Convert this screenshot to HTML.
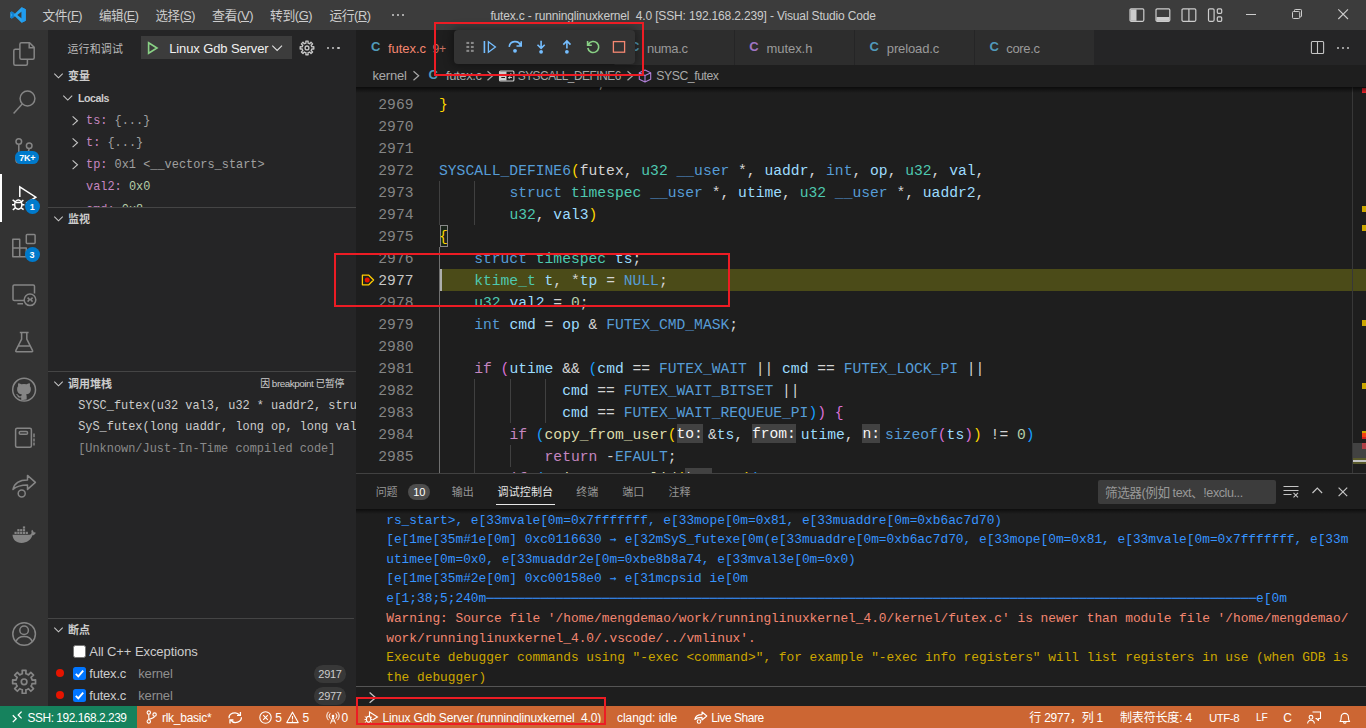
<!DOCTYPE html>
<html lang="zh-CN">
<head>
<meta charset="utf-8">
<title>futex.c - runninglinuxkernel_4.0 [SSH: 192.168.2.239] - Visual Studio Code</title>
<style>
*{box-sizing:border-box;margin:0;padding:0}
html,body{width:1366px;height:728px;overflow:hidden;background:#1e1e1e}
body{position:relative;font-family:"Liberation Sans","Noto Sans CJK SC",sans-serif;font-size:13px;color:#cccccc;line-height:1}
.abs{position:absolute}
.t{position:absolute;white-space:pre;line-height:20px;height:20px}
.mono{font-family:"Liberation Mono","Noto Sans CJK SC",monospace}
svg{position:absolute;overflow:visible}
/* title bar */
#titlebar{left:0;top:0;width:1366px;height:30px;background:#3c3c3c}
#titlebar .m{position:absolute;top:5px;height:20px;line-height:20px;font-size:13px;color:#cccccc;white-space:pre}
/* activity bar */
#activity{left:0;top:30px;width:48px;height:676px;background:#333333}
/* sidebar */
#sidebar{left:48px;top:30px;width:308px;height:676px;background:#252526}
/* editor */
#tabs{left:356px;top:30px;width:1010px;height:35px;background:#252526}
.tab{position:absolute;top:0;height:35px;background:#2d2d2d;color:#969696;font-size:13px}
#crumbs{left:356px;top:65px;width:1010px;height:22px;background:#1e1e1e}
#code{left:356px;top:87px;width:1010px;height:385px;background:#1e1e1e;overflow:hidden}
#panel{left:356px;top:472px;width:1010px;height:234px;background:#1e1e1e;border-top:1px solid #414141}
#status{left:0;top:706px;width:1366px;height:22px;background:#cc6633;color:#ffffff;font-size:12px}
.red{position:absolute;border:2px solid #e81123}
</style>
</head>
<body>
<div id="titlebar" class="abs">
<svg style="left:10px;top:7px;" width="16" height="16" viewBox="0 0 16 16"><path d="M11.6 0.3 L15.7 2.3 V13.7 L11.6 15.7 L4.9 9.2 L1.9 11.5 L0.3 10.7 V5.3 L1.9 4.5 L4.9 6.8 Z M11.7 4.6 L7.3 8 L11.7 11.4 Z" fill="#2aa5f0" fill-rule="evenodd"/><path d="M11.6 0.3 L15.7 2.3 V13.7 L11.6 15.7 Z" fill="#1f9cf0"/><path d="M0.3 5.3 L1.9 4.5 L4.9 6.8 L3.3 8 L4.9 9.2 L1.9 11.5 L0.3 10.7 L2.6 8 Z" fill="#0f7fd0"/></svg>
<span class="t" style="left:42.5px;top:5.6px;font-size:12.74px;line-height:20px;height:20px;letter-spacing:-0.450px;">文件(<u>F</u>)</span>
<span class="t" style="left:99px;top:5.6px;font-size:12.53px;line-height:20px;height:20px;letter-spacing:-0.450px;">编辑(<u>E</u>)</span>
<span class="t" style="left:155.5px;top:5.6px;font-size:12.53px;line-height:20px;height:20px;letter-spacing:-0.450px;">选择(<u>S</u>)</span>
<span class="t" style="left:212px;top:5.6px;font-size:12.98px;line-height:20px;height:20px;letter-spacing:-0.450px;">查看(<u>V</u>)</span>
<span class="t" style="left:270px;top:5.6px;font-size:12.85px;line-height:20px;height:20px;letter-spacing:-0.450px;">转到(<u>G</u>)</span>
<span class="t" style="left:329.4px;top:5.6px;font-size:12.8px;line-height:20px;height:20px;letter-spacing:-0.450px;">运行(<u>R</u>)</span>
<div class="abs" style="left:392px;top:14.2px;width:2px;height:2px;background:#cccccc;border-radius:1px;"></div>
<div class="abs" style="left:397.2px;top:14.2px;width:2px;height:2px;background:#cccccc;border-radius:1px;"></div>
<div class="abs" style="left:402.4px;top:14.2px;width:2px;height:2px;background:#cccccc;border-radius:1px;"></div>
<span class="t" style="left:490.4px;top:6px;font-size:12px;line-height:20px;height:20px;letter-spacing:-0.161px;">futex.c - runninglinuxkernel_4.0 [SSH: 192.168.2.239] - Visual Studio Code</span>
<svg style="left:1129px;top:8px;" width="16" height="16" viewBox="0 0 16 16"><rect x="1" y="0.9" width="13.8" height="12.4" rx="1.2" fill="none" stroke="#cccccc" stroke-width="1.2"/><rect x="1.5" y="1.4" width="6" height="11.4" fill="#cccccc"/></svg>
<svg style="left:1155px;top:8px;" width="16" height="16" viewBox="0 0 16 16"><rect x="1" y="0.9" width="13.8" height="12.4" rx="1.2" fill="none" stroke="#cccccc" stroke-width="1.2"/><rect x="1.5" y="9" width="12.8" height="3.9" fill="#cccccc"/></svg>
<svg style="left:1181px;top:8px;" width="16" height="16" viewBox="0 0 16 16"><rect x="1" y="0.9" width="13.8" height="12.4" rx="1.2" fill="none" stroke="#cccccc" stroke-width="1.2"/><path d="M7.9 1V13.2" stroke="#cccccc" stroke-width="1.2" fill="none"/></svg>
<svg style="left:1207px;top:8px;" width="16" height="16" viewBox="0 0 16 16"><rect x="1.500" y="0.900" width="5.600" height="12.400" rx="1.200" fill="none" stroke="#cccccc" stroke-width="1.2"/><rect x="10.300" y="0.900" width="4.400" height="4.400" rx="1" fill="none" stroke="#cccccc" stroke-width="1.2"/><rect x="10.300" y="8.900" width="4.400" height="4.400" rx="1" fill="none" stroke="#cccccc" stroke-width="1.2"/></svg>
<div class="abs" style="left:1245.7px;top:14px;width:10.3px;height:1px;background:#cccccc;"></div>
<svg style="left:1292px;top:9px;" width="11" height="10" viewBox="0 0 11 10"><rect x="0.500" y="2.500" width="7.200" height="7" rx="1" fill="none" stroke="#cccccc"/><path d="M2.500 2.500V1.300a.8.800 0 0 1 .8-.8H8.700a.8.800 0 0 1 .8.800V7a.8.800 0 0 1-.8.800H7.700" fill="none" stroke="#cccccc"/></svg>
<svg style="left:1338px;top:9px;" width="11" height="11" viewBox="0 0 11 11"><path d="M0.300 0.300L10 10M10 0.300L0.300 10" stroke="#cccccc" fill="none" stroke-width="1.100"/></svg>
</div>
<div id="activity" class="abs"></div>
<svg style="left:0;top:0" width="48" height="728" viewBox="0 0 48 728"><path d="M28.5 48.8V51.3H19.7V59.3M19.7 49.2H15.2a1.5 1.5 0 0 0-1.5 1.5V63.7a1.5 1.5 0 0 0 1.5 1.5H25.8a1.5 1.5 0 0 0 1.5-1.5V59.6" fill="none" stroke="#858585" stroke-width="0"/><path d="M19.9 49.3H15.3a1.5 1.5 0 0 0-1.5 1.5V63.8a1.5 1.5 0 0 0 1.5 1.5H25.9a1.5 1.5 0 0 0 1.5-1.5V59.5" fill="none" stroke="#858585" stroke-width="1.5"/><path d="M21.4 42.8H29.6L34.2 47.4V57.8a1.5 1.5 0 0 1-1.5 1.5H21.4a1.5 1.5 0 0 1-1.5-1.5V44.3a1.5 1.5 0 0 1 1.5-1.5Z" fill="none" stroke="#858585" stroke-width="1.5" stroke-linejoin="round"/><path d="M29.2 43V47.8H34" fill="none" stroke="#858585" stroke-width="1.5"/><circle cx="27.5" cy="98.5" r="7.4" fill="none" stroke="#858585" stroke-width="1.5"/><path d="M22.2 104 L13.6 113.6" fill="none" stroke="#858585" stroke-width="1.5"/><circle cx="18.8" cy="141.500" r="2.800" fill="none" stroke="#858585" stroke-width="1.5"/><circle cx="29.200" cy="145.800" r="2.800" fill="none" stroke="#858585" stroke-width="1.5"/><circle cx="18.800" cy="160" r="2.800" fill="none" stroke="#858585" stroke-width="1.5"/><path d="M18.8 144.2V157.3M29.2 148.5c0 4-4 5.5-10.4 6" fill="none" stroke="#858585" stroke-width="1.5"/><path d="M19.8 197V186.8L35.8 197.2L26 203.5" fill="none" stroke="#ffffff" stroke-width="1.5" stroke-linejoin="miter"/><ellipse cx="18.3" cy="204.6" rx="3.6" ry="4.6" fill="none" stroke="#ffffff" stroke-width="1.5"/><path d="M15.4 201.8 12.6 199.8M21.2 201.8 23.4 200.2M14.7 204.8H12M21.9 204.8H24.4M15.4 207.8 12.8 209.8M21.2 207.8 23.6 209.6M15.5 202.6H21.1" fill="none" stroke="#ffffff" stroke-width="1.5" stroke-width="1.2"/><path d="M12.8 239.300H19.700V248H26.300V256.800H12.800ZM12.800 248H19.700V256.800" fill="none" stroke="#858585" stroke-width="1.5" stroke-linejoin="round"/><rect x="26.3" y="234.6" width="8.8" height="8.8" rx="0.8" fill="none" stroke="#858585" stroke-width="1.5"/><path d="M24 300.6H14.3a1.3 1.3 0 0 1-1.3-1.3V286.3a1.3 1.3 0 0 1 1.3-1.3H33.2a1.3 1.3 0 0 1 1.3 1.3V293.5M17.4 303.7H23" fill="none" stroke="#858585" stroke-width="1.5"/><circle cx="30" cy="299.8" r="5.8" fill="none" stroke="#858585" stroke-width="1.5" stroke-width="1.3"/><path d="M27.6 297.6 29.6 299.6 27.6 301.6M32.6 297.6 30.6 299.6 32.6 301.6" fill="none" stroke="#858585" stroke-width="1.5" stroke-width="1"/><path d="M19.8 332.4H28.6M21.6 332.6V339.2L15.8 350.6a0.8 0.8 0 0 0 .7 1.2H31.9a0.8 0.8 0 0 0 .7-1.2L26.8 339.2V332.6M18.4 346H29.8" fill="none" stroke="#858585" stroke-width="1.5" stroke-linejoin="round"/><circle cx="24.1" cy="389.7" r="11.4" fill="none" stroke="#858585" stroke-width="1.5" stroke-width="1.6"/><path d="M21.2 400.2v-2.6c-3 .7-3.6-1.4-3.6-1.4-.5-1.2-1.2-1.6-1.2-1.6-1-.7.1-.7.1-.7 1.1.1 1.7 1.1 1.7 1.1 1 1.7 2.500 1.2 3.100.9.1-.7.4-1.200.7-1.500-2.400-.300-4.900-1.200-4.900-5.400 0-1.200.4-2.200 1.100-2.900-.1-.300-.5-1.400.1-2.900 0 0 .9-.3 3 1.100a10.300 10.300 0 0 1 5.400 0c2.100-1.400 3-1.100 3-1.100.6 1.500.2 2.600.1 2.900.7.700 1.100 1.700 1.100 2.900 0 4.200-2.500 5.100-4.900 5.400.4.300.700 1 .700 2v3.200Z" fill="#858585"/><rect x="15.6" y="428.2" width="15.8" height="19" rx="1.5" fill="none" stroke="#858585" stroke-width="1.5"/><rect x="19.2" y="431.6" width="8.4" height="2.600" rx="1.3" fill="none" stroke="#858585" stroke-width="1.5" stroke-width="1.1"/><path d="M34 433.6V437.2M34 438.400V441.4M34 442.400V445.600" fill="none" stroke="#858585" stroke-width="1.5"/><path d="M13 489.400C14.500 482.500 20 480 27.500 480V475.400L35.400 482.400L27.500 489.400V485C22 485 17.500 485.500 13 489.400Z" fill="none" stroke="#858585" stroke-width="1.5" stroke-linejoin="round"/><circle cx="21.700" cy="493.400" r="3.500" fill="none" stroke="#858585" stroke-width="1.5"/><path d="M12.500 534.800H29.500C30.600 534.800 31.400 534 31.600 532.600C31.200 531.800 31.300 530.700 32 529.800C33 530.500 33.500 531.400 33.600 532.300C34.500 532.100 35.300 532.300 35.800 532.700C35.300 534.300 34 535.200 32.400 535.300C30.800 540 27 542.900 21.600 542.900C16 542.900 12.800 539.700 12.500 534.800Z" fill="#858585"/><rect x="14.5" y="531.8" width="2.2" height="2.200" fill="#858585"/><rect x="17.3" y="531.8" width="2.2" height="2.200" fill="#858585"/><rect x="20.1" y="531.8" width="2.2" height="2.200" fill="#858585"/><rect x="22.9" y="531.8" width="2.2" height="2.200" fill="#858585"/><rect x="25.7" y="531.8" width="2.2" height="2.200" fill="#858585"/><rect x="17.3" y="529.1" width="2.2" height="2.200" fill="#858585"/><rect x="20.1" y="529.1" width="2.2" height="2.200" fill="#858585"/><rect x="22.9" y="529.1" width="2.2" height="2.200" fill="#858585"/><rect x="22.9" y="526.4" width="2.2" height="2.200" fill="#858585"/><circle cx="24.1" cy="634" r="11.3" fill="none" stroke="#858585" stroke-width="1.5"/><circle cx="24.100" cy="630.200" r="4.300" fill="none" stroke="#858585" stroke-width="1.5"/><path d="M16 641.800C17.200 637.500 20.500 636.400 24.100 636.400C27.700 636.400 31 637.500 32.200 641.800" fill="none" stroke="#858585" stroke-width="1.5"/><path d="M21.11 674.16 L22.34 673.79 L22.20 670.36 L26.00 670.36 L25.86 673.79 L27.39 674.29 L28.52 674.89 L30.84 672.36 L33.54 675.06 L31.01 677.38 L31.74 678.81 L32.11 680.04 L35.54 679.90 L35.54 683.70 L32.11 683.56 L31.61 685.09 L31.01 686.22 L33.54 688.54 L30.84 691.24 L28.52 688.71 L27.09 689.44 L25.86 689.81 L26.00 693.24 L22.20 693.24 L22.34 689.81 L20.81 689.31 L19.68 688.71 L17.36 691.24 L14.66 688.54 L17.19 686.22 L16.46 684.79 L16.09 683.56 L12.66 683.70 L12.66 679.90 L16.09 680.04 L16.59 678.51 L17.19 677.38 L14.66 675.06 L17.36 672.36 L19.68 674.89Z" fill="none" stroke="#858585" stroke-width="1.7" stroke-linejoin="round"/><circle cx="24.1" cy="681.8" r="2.8" fill="none" stroke="#858585" stroke-width="1.7"/></svg>
<div class="abs" style="left:0px;top:174px;width:2px;height:48px;background:#ffffff;"></div>
<div class="abs" style="left:14.8px;top:151.3px;width:24.7px;height:12.6px;background:#007acc;border-radius:6.3px;"></div>
<span class="t" style="left:19.2px;top:147.9px;font-size:9px;line-height:20px;height:20px;color:#ffffff;font-weight:bold;letter-spacing:-0.283px;">7K+</span>
<div class="abs" style="left:24.5px;top:198.5px;width:15px;height:15px;background:#007acc;border-radius:7.5px;"></div>
<span class="t" style="left:29.8px;top:196.6px;font-size:9px;line-height:20px;height:20px;color:#ffffff;font-weight:bold;">1</span>
<div class="abs" style="left:24.5px;top:247px;width:15px;height:15px;background:#007acc;border-radius:7.5px;"></div>
<span class="t" style="left:29.6px;top:245.1px;font-size:9px;line-height:20px;height:20px;color:#ffffff;font-weight:bold;">3</span>
<div id="sidebar" class="abs"></div>
<span class="t" style="left:67.5px;top:38.9px;font-size:11px;line-height:20px;height:20px;color:#bbbbbb;letter-spacing:0.125px;">运行和调试</span>
<div class="abs" style="left:141px;top:36px;width:151px;height:23px;background:#3c3c3c;"></div>
<svg style="left:147px;top:41px;" width="12" height="14" viewBox="0 0 12 14"><path d="M1.6 1.8V12.2L10 7Z" fill="none" stroke="#89d185" stroke-width="1.6" stroke-linejoin="miter"/></svg>
<span class="t" style="left:169.2px;top:38.9px;font-size:13px;line-height:20px;height:20px;color:#f0f0f0;letter-spacing:-0.118px;">Linux Gdb Server</span>
<svg style="left:272px;top:45.025px;" width="10.3" height="6.15" viewBox="0 0 10.3 6.15"><path d="M0.3 0.6L5.15 5.45L10 0.6" fill="none" stroke="#e0e0e0" stroke-width="1.1"/></svg>
<svg style="left:299px;top:40px;" width="16" height="16" viewBox="0 0 16 16"><path d="M6.21 3.34 L6.95 3.11 L6.87 1.09 L9.13 1.09 L9.05 3.11 L9.96 3.41 L10.64 3.77 L12.01 2.29 L13.61 3.89 L12.13 5.26 L12.56 6.11 L12.79 6.85 L14.81 6.77 L14.81 9.03 L12.79 8.95 L12.49 9.86 L12.13 10.54 L13.61 11.91 L12.01 13.51 L10.64 12.03 L9.79 12.46 L9.05 12.69 L9.13 14.71 L6.87 14.71 L6.95 12.69 L6.04 12.39 L5.36 12.03 L3.99 13.51 L2.39 11.91 L3.87 10.54 L3.44 9.69 L3.21 8.95 L1.19 9.03 L1.19 6.77 L3.21 6.85 L3.51 5.94 L3.87 5.26 L2.39 3.89 L3.99 2.29 L5.36 3.77Z" fill="none" stroke="#c5c5c5" stroke-width="1.35" stroke-linejoin="round"/><circle cx="8" cy="7.9" r="1.9" fill="none" stroke="#c5c5c5" stroke-width="1.35"/></svg>
<div class="abs" style="left:327px;top:46.8px;width:2.2px;height:2.2px;background:#c5c5c5;border-radius:1.1px;"></div>
<div class="abs" style="left:332.2px;top:46.8px;width:2.2px;height:2.2px;background:#c5c5c5;border-radius:1.1px;"></div>
<div class="abs" style="left:337.4px;top:46.8px;width:2.2px;height:2.2px;background:#c5c5c5;border-radius:1.1px;"></div>
<svg style="left:54px;top:73.25px;" width="9" height="5.5" viewBox="0 0 9 5.5"><path d="M0.3 0.6L4.5 4.8L8.7 0.6" fill="none" stroke="#c5c5c5" stroke-width="1.1"/></svg><span class="t" style="left:68px;top:66.1px;font-size:11px;line-height:20px;height:20px;color:#cccccc;font-weight:bold;">变量</span>
<svg style="left:63px;top:95.125px;" width="9.5" height="5.75" viewBox="0 0 9.5 5.75"><path d="M0.3 0.6L4.75 5.05L9.2 0.6" fill="none" stroke="#c5c5c5" stroke-width="1.1"/></svg>
<span class="t" style="left:78px;top:87.9px;font-size:10.65px;line-height:20px;height:20px;color:#cccccc;font-weight:bold;letter-spacing:-0.450px;">Locals</span>
<div class="abs" style="left:48px;top:109px;width:308px;height:98px;overflow:hidden">
<svg style="left:24.3px;top:6.65px;" width="6.225" height="9.5" viewBox="0 0 6.225 9.5"><path d="M0.6 0.3L5.525 4.75L0.6 9.2" fill="none" stroke="#c5c5c5" stroke-width="1.1"/></svg>
<span class="t" style="left:38px;top:2px;font-size:11.91px;line-height:20px;height:20px;font-family:'Liberation Mono','Noto Sans CJK SC',monospace;"><span style="color:#c586c0">ts:</span><span style="color:#a0a0a0"> {...}</span></span>
<svg style="left:24.3px;top:28.65px;" width="6.225" height="9.5" viewBox="0 0 6.225 9.5"><path d="M0.6 0.3L5.525 4.75L0.6 9.2" fill="none" stroke="#c5c5c5" stroke-width="1.1"/></svg>
<span class="t" style="left:38px;top:24px;font-size:11.91px;line-height:20px;height:20px;font-family:'Liberation Mono','Noto Sans CJK SC',monospace;"><span style="color:#c586c0">t:</span><span style="color:#a0a0a0"> {...}</span></span>
<svg style="left:24.3px;top:50.65px;" width="6.225" height="9.5" viewBox="0 0 6.225 9.5"><path d="M0.6 0.3L5.525 4.75L0.6 9.2" fill="none" stroke="#c5c5c5" stroke-width="1.1"/></svg>
<span class="t" style="left:38px;top:46px;font-size:11.91px;line-height:20px;height:20px;font-family:'Liberation Mono','Noto Sans CJK SC',monospace;"><span style="color:#c586c0">tp:</span><span style="color:#a0a0a0"> 0x1 &lt;__vectors_start&gt;</span></span>
<span class="t" style="left:38px;top:68px;font-size:11.91px;line-height:20px;height:20px;font-family:'Liberation Mono','Noto Sans CJK SC',monospace;"><span style="color:#c586c0">val2:</span><span style="color:#b5cea8"> 0x0</span></span>
<span class="t" style="left:38px;top:90.7px;font-size:11.91px;line-height:20px;height:20px;font-family:'Liberation Mono','Noto Sans CJK SC',monospace;"><span style="color:#c586c0">cmd:</span><span style="color:#b5cea8"> 0x8</span></span>
</div>
<div class="abs" style="left:48px;top:207px;width:308px;height:1px;background:#454545;"></div>
<svg style="left:54px;top:216.45px;" width="9" height="5.5" viewBox="0 0 9 5.5"><path d="M0.3 0.6L4.5 4.8L8.7 0.6" fill="none" stroke="#c5c5c5" stroke-width="1.1"/></svg><span class="t" style="left:68px;top:209.3px;font-size:11px;line-height:20px;height:20px;color:#cccccc;font-weight:bold;">监视</span>
<div class="abs" style="left:48px;top:371px;width:308px;height:1px;background:#454545;"></div>
<svg style="left:54px;top:380.65px;" width="9" height="5.5" viewBox="0 0 9 5.5"><path d="M0.3 0.6L4.5 4.8L8.7 0.6" fill="none" stroke="#c5c5c5" stroke-width="1.1"/></svg><span class="t" style="left:68px;top:373.5px;font-size:11px;line-height:20px;height:20px;color:#cccccc;font-weight:bold;">调用堆栈</span>
<span class="t" style="left:260.2px;top:374.2px;font-size:9.86px;line-height:20px;height:20px;color:#cccccc;letter-spacing:-0.450px;">因 breakpoint 已暂停</span>
<div class="abs" style="left:48px;top:393px;width:308px;height:70px;overflow:hidden">
<span class="t" style="left:30.2px;top:2.5px;font-size:11.91px;line-height:20px;height:20px;color:#cccccc;font-family:'Liberation Mono','Noto Sans CJK SC',monospace;">SYSC_futex(u32 val3, u32 * uaddr2, struct timespec * utime</span>
<span class="t" style="left:30.2px;top:24.3px;font-size:11.91px;line-height:20px;height:20px;color:#cccccc;font-family:'Liberation Mono','Noto Sans CJK SC',monospace;">SyS_futex(long uaddr, long op, long val, long utime</span>
<span class="t" style="left:30.2px;top:46.3px;font-size:11.91px;line-height:20px;height:20px;color:#8b8b8b;font-family:'Liberation Mono','Noto Sans CJK SC',monospace;">[Unknown/Just-In-Time compiled code]</span>
</div>
<div class="abs" style="left:48px;top:618px;width:306px;height:1px;background:#454545;"></div>
<svg style="left:54px;top:627.45px;" width="9" height="5.5" viewBox="0 0 9 5.5"><path d="M0.3 0.6L4.5 4.8L8.7 0.6" fill="none" stroke="#c5c5c5" stroke-width="1.1"/></svg><span class="t" style="left:68px;top:620.3px;font-size:11px;line-height:20px;height:20px;color:#cccccc;font-weight:bold;">断点</span>
<div class="abs" style="left:73px;top:645.3px;width:13px;height:13px;background:#ffffff;border:1px solid #767676;border-radius:2.5px;"></div>
<span class="t" style="left:89.3px;top:642.4px;font-size:13px;line-height:20px;height:20px;color:#cccccc;letter-spacing:-0.079px;">All C++ Exceptions</span>
<div class="abs" style="left:55.7px;top:669.3px;width:8.2px;height:8.2px;background:#e51400;border-radius:50%;"></div>
<div class="abs" style="left:73px;top:667px;width:13px;height:13px;background:#0075ff;border-radius:2.5px;"></div>
<svg style="left:73px;top:667px;" width="13" height="13" viewBox="0 0 13 13"><path d="M2.8 6.8L5.3 9.3L10.2 3.6" fill="none" stroke="#ffffff" stroke-width="1.9"/></svg>
<span class="t" style="left:89.3px;top:664.2px;font-size:13px;line-height:20px;height:20px;color:#cccccc;letter-spacing:-0.216px;">futex.c</span>
<span class="t" style="left:138.3px;top:664.2px;font-size:13px;line-height:20px;height:20px;color:#8f8f8f;letter-spacing:-0.184px;">kernel</span>
<div class="abs" style="left:314px;top:665.1px;width:32px;height:17.6px;background:#383838;border-radius:8.8px;"></div>
<span class="t" style="left:318.3px;top:664.4px;font-size:11px;line-height:20px;height:20px;color:#cccccc;letter-spacing:-0.261px;">2917</span>
<div class="abs" style="left:55.7px;top:691.3px;width:8.2px;height:8.2px;background:#e51400;border-radius:50%;"></div>
<div class="abs" style="left:73px;top:689px;width:13px;height:13px;background:#0075ff;border-radius:2.5px;"></div>
<svg style="left:73px;top:689px;" width="13" height="13" viewBox="0 0 13 13"><path d="M2.8 6.8L5.3 9.3L10.2 3.6" fill="none" stroke="#ffffff" stroke-width="1.9"/></svg>
<span class="t" style="left:89.3px;top:686.2px;font-size:13px;line-height:20px;height:20px;color:#cccccc;letter-spacing:-0.216px;">futex.c</span>
<span class="t" style="left:138.3px;top:686.2px;font-size:13px;line-height:20px;height:20px;color:#8f8f8f;letter-spacing:-0.184px;">kernel</span>
<div class="abs" style="left:314px;top:687.1px;width:32px;height:17.6px;background:#383838;border-radius:8.8px;"></div>
<span class="t" style="left:318.3px;top:686.4px;font-size:11px;line-height:20px;height:20px;color:#cccccc;letter-spacing:-0.261px;">2977</span>
<div id="tabs" class="abs"></div>
<div class="abs" style="left:356px;top:30px;width:258px;height:35px;background:#1e1e1e;"></div>
<span class="t" style="left:371px;top:37.1px;font-size:13px;line-height:20px;height:20px;color:#519aba;font-weight:bold;">C</span>
<span class="t" style="left:388px;top:38.8px;font-size:13px;line-height:20px;height:20px;color:#f48771;letter-spacing:-0.049px;">futex.c</span>
<span class="t" style="left:432.6px;top:38.8px;font-size:12.15px;line-height:20px;height:20px;color:#c87060;letter-spacing:-0.450px;">9+</span>
<div class="abs" style="left:615px;top:30px;width:119px;height:35px;background:#2d2d2d;"></div>
<span class="t" style="left:629.9px;top:37.1px;font-size:13px;line-height:20px;height:20px;color:#519aba;font-weight:bold;">C</span>
<span class="t" style="left:647px;top:38.8px;font-size:13px;line-height:20px;height:20px;color:#9a9a9a;letter-spacing:-0.328px;">numa.c</span>
<div class="abs" style="left:735px;top:30px;width:119px;height:35px;background:#2d2d2d;"></div>
<span class="t" style="left:749.2px;top:37.1px;font-size:13px;line-height:20px;height:20px;color:#a074c4;font-weight:bold;">C</span>
<span class="t" style="left:766.6px;top:38.8px;font-size:13px;line-height:20px;height:20px;color:#9a9a9a;letter-spacing:-0.075px;">mutex.h</span>
<div class="abs" style="left:855px;top:30px;width:119px;height:35px;background:#2d2d2d;"></div>
<span class="t" style="left:869.4px;top:37.1px;font-size:13px;line-height:20px;height:20px;color:#519aba;font-weight:bold;">C</span>
<span class="t" style="left:886.8px;top:38.8px;font-size:13px;line-height:20px;height:20px;color:#9a9a9a;letter-spacing:-0.123px;">preload.c</span>
<div class="abs" style="left:975px;top:30px;width:119px;height:35px;background:#2d2d2d;"></div>
<span class="t" style="left:989.4px;top:37.1px;font-size:13px;line-height:20px;height:20px;color:#519aba;font-weight:bold;">C</span>
<span class="t" style="left:1006.3px;top:38.8px;font-size:13px;line-height:20px;height:20px;color:#9a9a9a;letter-spacing:-0.341px;">core.c</span>
<svg style="left:1310px;top:40px;" width="16" height="16" viewBox="0 0 16 16"><rect x="1.400" y="1.500" width="12.200" height="12" rx="1" fill="none" stroke="#c5c5c5" stroke-width="1.100"/><path d="M7.500 1.500V13.500" stroke="#c5c5c5" stroke-width="1.1"/></svg>
<div class="abs" style="left:1336.7px;top:46.6px;width:2.2px;height:2.2px;background:#c5c5c5;border-radius:1.1px;"></div>
<div class="abs" style="left:1341.8px;top:46.6px;width:2.2px;height:2.2px;background:#c5c5c5;border-radius:1.1px;"></div>
<div class="abs" style="left:1346.9px;top:46.6px;width:2.2px;height:2.2px;background:#c5c5c5;border-radius:1.1px;"></div>
<div id="crumbs" class="abs"></div>
<span class="t" style="left:372.4px;top:66.4px;font-size:13px;line-height:20px;height:20px;color:#a9a9a9;letter-spacing:-0.164px;">kernel</span>
<svg style="left:412.5px;top:71.3px;" width="6.376" height="9.6" viewBox="0 0 6.376 9.6"><path d="M0.5 0.3L5.676 4.8L0.5 9.3" fill="none" stroke="#a9a9a9" stroke-width="1.2"/></svg>
<span class="t" style="left:428.4px;top:64.9px;font-size:13px;line-height:20px;height:20px;color:#519aba;font-weight:bold;">C</span>
<span class="t" style="left:446px;top:66.4px;font-size:13px;line-height:20px;height:20px;color:#a9a9a9;letter-spacing:-0.383px;">futex.c</span>
<svg style="left:487px;top:71.3px;" width="6.376" height="9.6" viewBox="0 0 6.376 9.6"><path d="M0.5 0.3L5.676 4.8L0.5 9.3" fill="none" stroke="#a9a9a9" stroke-width="1.2"/></svg>
<svg style="left:499px;top:69.5px;" width="15" height="12" viewBox="0 0 15 12"><rect x="0.5" y="1" width="14.4" height="10" rx="1" fill="none" stroke="#d0d0d0" stroke-width="1.1"/><rect x="1" y="1.500" width="6.500" height="9" fill="#d0d0d0"/><path d="M2.300 7.500H6M2.300 5H6" stroke="#1e1e1e" stroke-width="1"/><path d="M9 4.500H13M9 7.500H13M12 3 10 9" stroke="#d0d0d0" stroke-width="0.9" fill="none"/></svg>
<span class="t" style="left:517.7px;top:66.4px;font-size:11.85px;line-height:20px;height:20px;color:#a9a9a9;letter-spacing:-0.450px;">SYSCALL_DEFINE6</span>
<svg style="left:627px;top:71.3px;" width="6.376" height="9.6" viewBox="0 0 6.376 9.6"><path d="M0.5 0.3L5.676 4.8L0.5 9.3" fill="none" stroke="#a9a9a9" stroke-width="1.2"/></svg>
<svg style="left:638px;top:69px;" width="14" height="14" viewBox="0 0 14 14"><path d="M7 1L12.700 3.800V10.200L7 13L1.300 10.200V3.800ZM1.500 3.900L7 6.600L12.500 3.900M7 6.600V12.800" fill="none" stroke="#b180d7" stroke-width="1.100" stroke-linejoin="round"/></svg>
<span class="t" style="left:656.3px;top:66.4px;font-size:12.25px;line-height:20px;height:20px;color:#a9a9a9;letter-spacing:-0.450px;">SYSC_futex</span>
<div class="abs" style="left:356px;top:87px;width:1010px;height:6px;background:linear-gradient(#000000a0,#00000000);z-index:3;"></div>
<div class="abs" style="left:454px;top:30px;width:181px;height:34px;background:#333333;border-radius:4px;box-shadow:0 0 8px 2px rgba(0,0,0,.36);z-index:5;"></div>
<svg style="left:0;top:0;z-index:6" width="700" height="70" viewBox="0 0 700 70"><rect x="466.4" y="41.9" width="2.800" height="2.100" fill="#8a8a8a"/><rect x="466.4" y="45.9" width="2.800" height="2.100" fill="#8a8a8a"/><rect x="466.4" y="49.8" width="2.800" height="2.100" fill="#8a8a8a"/><rect x="470.9" y="41.9" width="2.800" height="2.100" fill="#8a8a8a"/><rect x="470.9" y="45.9" width="2.800" height="2.100" fill="#8a8a8a"/><rect x="470.9" y="49.8" width="2.800" height="2.100" fill="#8a8a8a"/><path d="M484.400 41V53" stroke="#75beff" stroke-width="1.600" fill="none"/><path d="M488.400 41.800V52.200L495.400 47Z" stroke="#75beff" stroke-width="1.300" fill="none" stroke-linejoin="miter"/><path d="M509.200 46.800A5.900 5.900 0 0 1 520.600 45.500M521.200 41.200V46H516.500" stroke="#75beff" stroke-width="1.600" fill="none"/><circle cx="515" cy="50.800" r="1.900" fill="#75beff"/><path d="M541.100 40.800V48.200M537.500 44.800L541.100 48.400L544.700 44.800" stroke="#75beff" stroke-width="1.600" fill="none"/><circle cx="541.100" cy="51.800" r="1.900" fill="#75beff"/><path d="M566.900 48.600V41.200M563.300 44.600L566.900 41L570.500 44.600" stroke="#75beff" stroke-width="1.600" fill="none"/><circle cx="566.900" cy="51.800" r="1.900" fill="#75beff"/><path d="M588.400 44.300A5.500 5.500 0 1 1 587.800 48M587.600 41V45.200H591.800" stroke="#89d185" stroke-width="1.600" fill="none"/><rect x="613.400" y="41.600" width="11.200" height="10.600" fill="none" stroke="#f48771" stroke-width="1.300"/></svg>
<div id="code" class="abs" style="height:386px">
<div class="abs" style="left:83.6px;top:182px;width:927px;height:22px;background:#4b4b18;"></div>
<div class="abs" style="left:83.3px;top:94px;width:1px;height:44px;background:#404040;"></div>
<div class="abs" style="left:118.488px;top:94px;width:1px;height:44px;background:#404040;"></div>
<div class="abs" style="left:83.3px;top:160px;width:1px;height:264px;background:#707070;"></div>
<div class="abs" style="left:118.488px;top:292px;width:1px;height:132px;background:#404040;"></div>
<div class="abs" style="left:153.676px;top:292px;width:1px;height:44px;background:#404040;"></div>
<div class="abs" style="left:188.864px;top:292px;width:1px;height:44px;background:#404040;"></div>
<div class="abs" style="left:153.676px;top:358px;width:1px;height:22px;background:#404040;"></div>
<div class="abs" style="left:83.6px;top:182px;width:2px;height:22px;background:#aeafad;"></div>
<div class="abs" style="left:83.6px;top:138px;width:8.6px;height:22px;background:rgba(0,100,0,.1);border:1px solid #888888;"></div>
<span class="t" style="left:22.3px;top:-15.5px;font-size:14.66px;line-height:22px;height:22px;color:#858585;font-family:'Liberation Mono','Noto Sans CJK SC',monospace;">2968</span>
<span class="t" style="left:83px;top:-15.5px;font-size:14.66px;line-height:22px;height:22px;font-family:'Liberation Mono','Noto Sans CJK SC',monospace;"><span style="color:#d4d4d4">    </span><span style="color:#c586c0">return</span><span style="color:#d4d4d4"> -</span><span style="color:#569cd6">ENOSYS</span><span style="color:#d4d4d4">;</span></span>
<span class="t" style="left:22.3px;top:6.5px;font-size:14.66px;line-height:22px;height:22px;color:#858585;font-family:'Liberation Mono','Noto Sans CJK SC',monospace;">2969</span>
<span class="t" style="left:83px;top:6.5px;font-size:14.66px;line-height:22px;height:22px;font-family:'Liberation Mono','Noto Sans CJK SC',monospace;"><span style="color:#ffd700">}</span></span>
<span class="t" style="left:22.3px;top:28.5px;font-size:14.66px;line-height:22px;height:22px;color:#858585;font-family:'Liberation Mono','Noto Sans CJK SC',monospace;">2970</span>
<span class="t" style="left:22.3px;top:50.5px;font-size:14.66px;line-height:22px;height:22px;color:#858585;font-family:'Liberation Mono','Noto Sans CJK SC',monospace;">2971</span>
<span class="t" style="left:22.3px;top:72.5px;font-size:14.66px;line-height:22px;height:22px;color:#858585;font-family:'Liberation Mono','Noto Sans CJK SC',monospace;">2972</span>
<span class="t" style="left:83px;top:72.5px;font-size:14.66px;line-height:22px;height:22px;font-family:'Liberation Mono','Noto Sans CJK SC',monospace;"><span style="color:#569cd6">SYSCALL_DEFINE6</span><span style="color:#ffd700">(</span><span style="color:#d4d4d4">futex, </span><span style="color:#4ec9b0">u32</span><span style="color:#d4d4d4"> </span><span style="color:#569cd6">__user</span><span style="color:#d4d4d4"> *, </span><span style="color:#9cdcfe">uaddr</span><span style="color:#d4d4d4">, </span><span style="color:#569cd6">int</span><span style="color:#d4d4d4">, </span><span style="color:#9cdcfe">op</span><span style="color:#d4d4d4">, </span><span style="color:#4ec9b0">u32</span><span style="color:#d4d4d4">, </span><span style="color:#9cdcfe">val</span><span style="color:#d4d4d4">,</span></span>
<span class="t" style="left:22.3px;top:94.5px;font-size:14.66px;line-height:22px;height:22px;color:#858585;font-family:'Liberation Mono','Noto Sans CJK SC',monospace;">2973</span>
<span class="t" style="left:83px;top:94.5px;font-size:14.66px;line-height:22px;height:22px;font-family:'Liberation Mono','Noto Sans CJK SC',monospace;"><span style="color:#d4d4d4">        </span><span style="color:#569cd6">struct</span><span style="color:#d4d4d4"> </span><span style="color:#4ec9b0">timespec</span><span style="color:#d4d4d4"> </span><span style="color:#569cd6">__user</span><span style="color:#d4d4d4"> *, </span><span style="color:#9cdcfe">utime</span><span style="color:#d4d4d4">, </span><span style="color:#4ec9b0">u32</span><span style="color:#d4d4d4"> </span><span style="color:#569cd6">__user</span><span style="color:#d4d4d4"> *, </span><span style="color:#9cdcfe">uaddr2</span><span style="color:#d4d4d4">,</span></span>
<span class="t" style="left:22.3px;top:116.5px;font-size:14.66px;line-height:22px;height:22px;color:#858585;font-family:'Liberation Mono','Noto Sans CJK SC',monospace;">2974</span>
<span class="t" style="left:83px;top:116.5px;font-size:14.66px;line-height:22px;height:22px;font-family:'Liberation Mono','Noto Sans CJK SC',monospace;"><span style="color:#d4d4d4">        </span><span style="color:#4ec9b0">u32</span><span style="color:#d4d4d4">, </span><span style="color:#9cdcfe">val3</span><span style="color:#ffd700">)</span></span>
<span class="t" style="left:22.3px;top:138.5px;font-size:14.66px;line-height:22px;height:22px;color:#858585;font-family:'Liberation Mono','Noto Sans CJK SC',monospace;">2975</span>
<span class="t" style="left:83px;top:138.5px;font-size:14.66px;line-height:22px;height:22px;font-family:'Liberation Mono','Noto Sans CJK SC',monospace;"><span style="color:#ffd700">{</span></span>
<span class="t" style="left:22.3px;top:160.5px;font-size:14.66px;line-height:22px;height:22px;color:#858585;font-family:'Liberation Mono','Noto Sans CJK SC',monospace;">2976</span>
<span class="t" style="left:83px;top:160.5px;font-size:14.66px;line-height:22px;height:22px;font-family:'Liberation Mono','Noto Sans CJK SC',monospace;"><span style="color:#d4d4d4">    </span><span style="color:#569cd6">struct</span><span style="color:#d4d4d4"> </span><span style="color:#4ec9b0">timespec</span><span style="color:#d4d4d4"> </span><span style="color:#9cdcfe">ts</span><span style="color:#d4d4d4">;</span></span>
<span class="t" style="left:22.3px;top:182.5px;font-size:14.66px;line-height:22px;height:22px;color:#c6c6c6;font-family:'Liberation Mono','Noto Sans CJK SC',monospace;">2977</span>
<span class="t" style="left:83px;top:182.5px;font-size:14.66px;line-height:22px;height:22px;font-family:'Liberation Mono','Noto Sans CJK SC',monospace;"><span style="color:#d4d4d4">    </span><span style="color:#4ec9b0">ktime_t</span><span style="color:#d4d4d4"> </span><span style="color:#9cdcfe">t</span><span style="color:#d4d4d4">, *</span><span style="color:#9cdcfe">tp</span><span style="color:#d4d4d4"> = </span><span style="color:#569cd6">NULL</span><span style="color:#d4d4d4">;</span></span>
<span class="t" style="left:22.3px;top:204.5px;font-size:14.66px;line-height:22px;height:22px;color:#858585;font-family:'Liberation Mono','Noto Sans CJK SC',monospace;">2978</span>
<span class="t" style="left:83px;top:204.5px;font-size:14.66px;line-height:22px;height:22px;font-family:'Liberation Mono','Noto Sans CJK SC',monospace;"><span style="color:#d4d4d4">    </span><span style="color:#4ec9b0">u32</span><span style="color:#d4d4d4"> </span><span style="color:#9cdcfe">val2</span><span style="color:#d4d4d4"> = </span><span style="color:#b5cea8">0</span><span style="color:#d4d4d4">;</span></span>
<span class="t" style="left:22.3px;top:226.5px;font-size:14.66px;line-height:22px;height:22px;color:#858585;font-family:'Liberation Mono','Noto Sans CJK SC',monospace;">2979</span>
<span class="t" style="left:83px;top:226.5px;font-size:14.66px;line-height:22px;height:22px;font-family:'Liberation Mono','Noto Sans CJK SC',monospace;"><span style="color:#d4d4d4">    </span><span style="color:#569cd6">int</span><span style="color:#d4d4d4"> </span><span style="color:#9cdcfe">cmd</span><span style="color:#d4d4d4"> = </span><span style="color:#9cdcfe">op</span><span style="color:#d4d4d4"> &amp; </span><span style="color:#569cd6">FUTEX_CMD_MASK</span><span style="color:#d4d4d4">;</span></span>
<span class="t" style="left:22.3px;top:248.5px;font-size:14.66px;line-height:22px;height:22px;color:#858585;font-family:'Liberation Mono','Noto Sans CJK SC',monospace;">2980</span>
<span class="t" style="left:22.3px;top:270.5px;font-size:14.66px;line-height:22px;height:22px;color:#858585;font-family:'Liberation Mono','Noto Sans CJK SC',monospace;">2981</span>
<span class="t" style="left:83px;top:270.5px;font-size:14.66px;line-height:22px;height:22px;font-family:'Liberation Mono','Noto Sans CJK SC',monospace;"><span style="color:#d4d4d4">    </span><span style="color:#c586c0">if</span><span style="color:#d4d4d4"> </span><span style="color:#da70d6">(</span><span style="color:#9cdcfe">utime</span><span style="color:#d4d4d4"> &amp;&amp; </span><span style="color:#179fff">(</span><span style="color:#9cdcfe">cmd</span><span style="color:#d4d4d4"> == </span><span style="color:#569cd6">FUTEX_WAIT</span><span style="color:#d4d4d4"> || </span><span style="color:#9cdcfe">cmd</span><span style="color:#d4d4d4"> == </span><span style="color:#569cd6">FUTEX_LOCK_PI</span><span style="color:#d4d4d4"> ||</span></span>
<span class="t" style="left:22.3px;top:292.5px;font-size:14.66px;line-height:22px;height:22px;color:#858585;font-family:'Liberation Mono','Noto Sans CJK SC',monospace;">2982</span>
<span class="t" style="left:83px;top:292.5px;font-size:14.66px;line-height:22px;height:22px;font-family:'Liberation Mono','Noto Sans CJK SC',monospace;"><span style="color:#d4d4d4">              </span><span style="color:#9cdcfe">cmd</span><span style="color:#d4d4d4"> == </span><span style="color:#569cd6">FUTEX_WAIT_BITSET</span><span style="color:#d4d4d4"> ||</span></span>
<span class="t" style="left:22.3px;top:314.5px;font-size:14.66px;line-height:22px;height:22px;color:#858585;font-family:'Liberation Mono','Noto Sans CJK SC',monospace;">2983</span>
<span class="t" style="left:83px;top:314.5px;font-size:14.66px;line-height:22px;height:22px;font-family:'Liberation Mono','Noto Sans CJK SC',monospace;"><span style="color:#d4d4d4">              </span><span style="color:#9cdcfe">cmd</span><span style="color:#d4d4d4"> == </span><span style="color:#569cd6">FUTEX_WAIT_REQUEUE_PI</span><span style="color:#179fff">)</span><span style="color:#da70d6">)</span><span style="color:#d4d4d4"> </span><span style="color:#da70d6">{</span></span>
<span class="t" style="left:22.3px;top:336.5px;font-size:14.66px;line-height:22px;height:22px;color:#858585;font-family:'Liberation Mono','Noto Sans CJK SC',monospace;">2984</span>
<span class="t" style="left:83px;top:336.5px;font-size:14.66px;line-height:22px;height:22px;font-family:'Liberation Mono','Noto Sans CJK SC',monospace;"><span style="color:#d4d4d4">        </span><span style="color:#c586c0">if</span><span style="color:#d4d4d4"> </span><span style="color:#179fff">(</span><span style="color:#dcdcaa">copy_from_user</span><span style="color:#ffd700">(</span><span style="background:#424242;color:#f6f6f6;display:inline-block;height:19px;line-height:20px;vertical-align:top;margin-top:0.5px">to:</span><span style="display:inline-block;width:5px"></span><span style="color:#d4d4d4">&amp;</span><span style="color:#9cdcfe">ts</span><span style="color:#d4d4d4">, </span><span style="background:#424242;color:#f6f6f6;display:inline-block;height:19px;line-height:20px;vertical-align:top;margin-top:0.5px">from:</span><span style="display:inline-block;width:5px"></span><span style="color:#9cdcfe">utime</span><span style="color:#d4d4d4">, </span><span style="background:#424242;color:#f6f6f6;display:inline-block;height:19px;line-height:20px;vertical-align:top;margin-top:0.5px">n:</span><span style="display:inline-block;width:5px"></span><span style="color:#569cd6">sizeof</span><span style="color:#da70d6">(</span><span style="color:#9cdcfe">ts</span><span style="color:#da70d6">)</span><span style="color:#ffd700">)</span><span style="color:#d4d4d4"> != </span><span style="color:#b5cea8">0</span><span style="color:#179fff">)</span></span>
<span class="t" style="left:22.3px;top:358.5px;font-size:14.66px;line-height:22px;height:22px;color:#858585;font-family:'Liberation Mono','Noto Sans CJK SC',monospace;">2985</span>
<span class="t" style="left:83px;top:358.5px;font-size:14.66px;line-height:22px;height:22px;font-family:'Liberation Mono','Noto Sans CJK SC',monospace;"><span style="color:#d4d4d4">            </span><span style="color:#c586c0">return</span><span style="color:#d4d4d4"> -</span><span style="color:#569cd6">EFAULT</span><span style="color:#d4d4d4">;</span></span>
<span class="t" style="left:22.3px;top:380.5px;font-size:14.66px;line-height:22px;height:22px;color:#858585;font-family:'Liberation Mono','Noto Sans CJK SC',monospace;">2986</span>
<span class="t" style="left:83px;top:380.5px;font-size:14.66px;line-height:22px;height:22px;font-family:'Liberation Mono','Noto Sans CJK SC',monospace;"><span style="color:#d4d4d4">        </span><span style="color:#c586c0">if</span><span style="color:#d4d4d4"> </span><span style="color:#179fff">(</span><span style="color:#d4d4d4">!</span><span style="color:#dcdcaa">timespec_valid</span><span style="color:#ffd700">(</span><span style="background:#424242;color:#f6f6f6;display:inline-block;height:19px;line-height:20px;vertical-align:top;margin-top:0.5px">ts:</span><span style="display:inline-block;width:5px"></span><span style="color:#d4d4d4">&amp;</span><span style="color:#9cdcfe">ts</span><span style="color:#ffd700">)</span><span style="color:#179fff">)</span></span>
<svg style="left:5px;top:186px;" width="14" height="14" viewBox="0 0 14 14"><path d="M1.4 2.200H7.800L12.600 7L7.800 11.800H1.400Z" fill="none" stroke="#ffcc00" stroke-width="1.300" stroke-linejoin="round"/><circle cx="6.200" cy="7" r="2.500" fill="#e51400"/></svg>
<div class="abs" style="left:996px;top:0px;width:1px;height:386px;background:#383838;"></div>
<div class="abs" style="left:1006px;top:1px;width:4px;height:5px;background:#e8232b;"></div>
<div class="abs" style="left:1006px;top:119px;width:4px;height:6px;background:#cca700;"></div>
<div class="abs" style="left:1006px;top:138px;width:4px;height:5.5px;background:#cca700;"></div>
<div class="abs" style="left:1006px;top:233px;width:4px;height:5.5px;background:#cca700;"></div>
<div class="abs" style="left:1006px;top:296px;width:4px;height:5.5px;background:#cca700;"></div>
<div class="abs" style="left:1006px;top:344px;width:4px;height:2px;background:#cca700;"></div>
<div class="abs" style="left:1006px;top:346px;width:4px;height:4.3px;background:#f04010;"></div>
<div class="abs" style="left:1006px;top:350.3px;width:4px;height:1.7px;background:#d02020;"></div>
<div class="abs" style="left:997px;top:356px;width:13px;height:21px;background:#424242;"></div>
<div class="abs" style="left:1006px;top:356px;width:4px;height:6px;background:#b04045;"></div>
<div class="abs" style="left:997px;top:371px;width:13px;height:6px;background:#5a5a2c;"></div>
<div class="abs" style="left:997px;top:373px;width:13px;height:2px;background:#c4c4c4;"></div>
</div>
<div id="panel" class="abs" style="top:473px;height:233px"></div>
<span class="t" style="left:375.8px;top:482.4px;font-size:11px;line-height:20px;height:20px;color:#969696;letter-spacing:-0.300px;">问题</span>
<div class="abs" style="left:408.2px;top:483.9px;width:21.6px;height:16.5px;background:#4d4d4d;border-radius:8.300px;"></div>
<span class="t" style="left:413.2px;top:481.5px;font-size:11px;line-height:20px;height:20px;color:#ffffff;letter-spacing:-0.050px;">10</span>
<span class="t" style="left:451.7px;top:482.4px;font-size:11px;line-height:20px;height:20px;color:#969696;">输出</span>
<span class="t" style="left:497.6px;top:482.4px;font-size:11px;line-height:20px;height:20px;color:#e7e7e7;letter-spacing:0.100px;">调试控制台</span>
<div class="abs" style="left:496px;top:504px;width:59px;height:1px;background:#e7e7e7;"></div>
<span class="t" style="left:576.3px;top:482.4px;font-size:11px;line-height:20px;height:20px;color:#969696;">终端</span>
<span class="t" style="left:622.2px;top:482.4px;font-size:11px;line-height:20px;height:20px;color:#969696;">端口</span>
<span class="t" style="left:668.5px;top:482.4px;font-size:11px;line-height:20px;height:20px;color:#969696;">注释</span>
<div class="abs" style="left:1098px;top:480px;width:177.6px;height:24px;background:#3c3c3c;border-radius:2px;"></div>
<span class="t" style="left:1105px;top:482.9px;font-size:12.62px;line-height:20px;height:20px;color:#989898;letter-spacing:-0.450px;">筛选器(例如 text、!exclu...</span>
<svg style="left:1283px;top:484px;" width="16" height="14" viewBox="0 0 16 14"><path d="M0.5 2.500H15.500M0.500 6.500H15.500M0.500 10.500H8.500M10.500 8.800L15 13.300M15 8.800L10.500 13.300" stroke="#c5c5c5" stroke-width="1.100" fill="none"/></svg>
<svg style="left:1311.5px;top:487px;" width="11" height="7" viewBox="0 0 11 7"><path d="M0.500 6L5.300 1.200L10.100 6" stroke="#c5c5c5" stroke-width="1.200" fill="none"/></svg>
<svg style="left:1338px;top:486.6px;" width="10" height="10" viewBox="0 0 10 10"><path d="M0.600 0.600L9.200 9.200M9.200 0.600L0.600 9.200" stroke="#c5c5c5" stroke-width="1.200" fill="none"/></svg>
<div class="abs" style="left:356px;top:509px;width:1010px;height:5px;background:linear-gradient(#00000090,#00000000);"></div>
<span class="t" style="left:386.2px;top:510.6px;font-size:12.83px;line-height:20px;height:20px;color:#3794ff;font-family:'Liberation Mono','Noto Sans CJK SC',monospace;">rs_start&gt;, e[33mvale[0m=0x7fffffff, e[33mope[0m=0x81, e[33muaddre[0m=0xb6ac7d70)</span>
<span class="t" style="left:386.2px;top:529.6px;font-size:12.83px;line-height:20px;height:20px;color:#3794ff;font-family:'Liberation Mono','Noto Sans CJK SC',monospace;">[e[1me[35m#1e[0m] 0xc0116630 <span style="display:inline-block;width:7.697px;text-align:center;font-family:'DejaVu Sans Mono',monospace;font-size:11px;vertical-align:top">→</span> e[32mSyS_futexe[0m(e[33muaddre[0m=0xb6ac7d70, e[33mope[0m=0x81, e[33mvale[0m=0x7fffffff, e[33m</span>
<span class="t" style="left:386.2px;top:549.6px;font-size:12.83px;line-height:20px;height:20px;color:#3794ff;font-family:'Liberation Mono','Noto Sans CJK SC',monospace;">utimee[0m=0x0, e[33muaddr2e[0m=0xbe8b8a74, e[33mval3e[0m=0x0)</span>
<span class="t" style="left:386.2px;top:568.6px;font-size:12.83px;line-height:20px;height:20px;color:#3794ff;font-family:'Liberation Mono','Noto Sans CJK SC',monospace;">[e[1me[35m#2e[0m] 0xc00158e0 <span style="display:inline-block;width:7.697px;text-align:center;font-family:'DejaVu Sans Mono',monospace;font-size:11px;vertical-align:top">→</span> e[31mcpsid ie[0m</span>
<span class="t" style="left:386.2px;top:588.6px;font-size:12.83px;line-height:20px;height:20px;color:#3794ff;font-family:'Liberation Mono','Noto Sans CJK SC',monospace;">e[1;38;5;240m────────────────────────────────────────────────────────────────────────────────────────────────────e[0m</span>
<span class="t" style="left:386.2px;top:608.6px;font-size:12.83px;line-height:20px;height:20px;color:#f48771;font-family:'Liberation Mono','Noto Sans CJK SC',monospace;">Warning: Source file '/home/mengdemao/work/runninglinuxkernel_4.0/kernel/futex.c' is newer than module file '/home/mengdemao/</span>
<span class="t" style="left:386.2px;top:628.6px;font-size:12.83px;line-height:20px;height:20px;color:#f48771;font-family:'Liberation Mono','Noto Sans CJK SC',monospace;">work/runninglinuxkernel_4.0/.vscode/../vmlinux'.</span>
<span class="t" style="left:386.2px;top:647.6px;font-size:12.83px;line-height:20px;height:20px;color:#cca700;font-family:'Liberation Mono','Noto Sans CJK SC',monospace;">Execute debugger commands using "-exec &lt;command&gt;", for example "-exec info registers" will list registers in use (when GDB is</span>
<span class="t" style="left:386.2px;top:667.6px;font-size:12.83px;line-height:20px;height:20px;color:#cca700;font-family:'Liberation Mono','Noto Sans CJK SC',monospace;">the debugger)</span>
<div class="abs" style="left:356px;top:686px;width:1010px;height:1px;background:#555555;"></div>
<svg style="left:369px;top:691.5px;" width="8" height="12" viewBox="0 0 8 12"><path d="M0.600 0.600L6.600 5.700L0.600 10.800" stroke="#c5c5c5" stroke-width="1.300" fill="none"/></svg>
<div id="status" class="abs"></div>
<div class="abs" style="left:0px;top:706px;width:137px;height:22px;background:#16825d;"></div>
<svg style="left:12px;top:711px;" width="11" height="12" viewBox="0 0 11 12"><path d="M0.800 4.300L4.200 7.700L0.800 11.100M9.600 0.600L6.200 4L9.600 7.400" stroke="#fff" stroke-width="1.300" fill="none"/></svg>
<span class="t" style="left:27.6px;top:708.1px;font-size:11.88px;line-height:20px;height:20px;color:#ffffff;letter-spacing:-0.450px;">SSH: 192.168.2.239</span>
<svg style="left:146px;top:710px;" width="11" height="14" viewBox="0 0 11 14"><circle cx="2.800" cy="2.600" r="1.700" fill="none" stroke="#fff" stroke-width="1.100"/><circle cx="2.800" cy="11.400" r="1.700" fill="none" stroke="#fff" stroke-width="1.100"/><circle cx="8.600" cy="4.600" r="1.700" fill="none" stroke="#fff" stroke-width="1.100"/><path d="M2.800 4.300V9.700M8.600 6.300C8.600 8.500 5 8 2.900 9.600" fill="none" stroke="#fff" stroke-width="1.100"/></svg>
<span class="t" style="left:162px;top:708.1px;font-size:12px;line-height:20px;height:20px;color:#ffffff;letter-spacing:-0.270px;">rlk_basic*</span>
<svg style="left:228px;top:710px;" width="15" height="14" viewBox="0 0 15 14"><path d="M1.200 8.200A5.600 4.300 0 0 1 11.600 5.200M13.200 7.200A5.600 4.300 0 0 1 2.800 10.200" fill="none" stroke="#fff" stroke-width="1.300"/><path d="M12.400 2V5.400H9M2 13.400V10H5.400" fill="none" stroke="#fff" stroke-width="1.300"/></svg>
<svg style="left:258.5px;top:710.5px;" width="13" height="13" viewBox="0 0 13 13"><circle cx="6.500" cy="6.500" r="5.700" fill="none" stroke="#fff" stroke-width="1.100"/><path d="M4.200 4.200L8.800 8.800M8.800 4.200L4.200 8.800" stroke="#fff" stroke-width="1.100"/></svg>
<span class="t" style="left:275.3px;top:708.1px;font-size:12px;line-height:20px;height:20px;color:#ffffff;">5</span>
<svg style="left:286px;top:710.5px;" width="13" height="13" viewBox="0 0 13 13"><path d="M6.500 1.200L12.200 11.600H0.800Z" fill="none" stroke="#fff" stroke-width="1.100" stroke-linejoin="round"/><path d="M6.500 5V8.600M6.500 9.600V10.700" stroke="#fff" stroke-width="1.100"/></svg>
<span class="t" style="left:302.5px;top:708.1px;font-size:12px;line-height:20px;height:20px;color:#ffffff;">5</span>
<svg style="left:326.5px;top:710.5px;" width="12" height="13" viewBox="0 0 12 13"><circle cx="6" cy="5" r="1.300" fill="#fff"/><path d="M6 6L3.500 12.500M6 6L8.500 12.500M4.300 10H7.700" stroke="#fff" stroke-width="1" fill="none"/><path d="M3.300 2.300A3.800 3.800 0 0 0 3.300 7.700M8.700 2.300A3.800 3.800 0 0 1 8.700 7.700M1.500 0.800A6 6 0 0 0 1.500 9.200M10.500 0.800A6 6 0 0 1 10.500 9.200" stroke="#fff" stroke-width="1" fill="none"/></svg>
<span class="t" style="left:341.5px;top:708.1px;font-size:12px;line-height:20px;height:20px;color:#ffffff;">0</span>
<svg style="left:363.5px;top:711px;" width="15" height="12" viewBox="0 0 15 12"><path d="M5.500 5V1L13.500 6L8.500 9" fill="none" stroke="#fff" stroke-width="1.100"/><ellipse cx="4.600" cy="8.300" rx="2.200" ry="2.900" fill="none" stroke="#fff" stroke-width="1.100"/><path d="M2.600 6.800L0.800 5.600M2.400 8.500H0.500M2.600 10.200L0.900 11.400M6.600 6.800L8 5.900M6.800 8.500H8.400M6.600 10.200L8 11.300" stroke="#fff" stroke-width="0.900"/></svg>
<span class="t" style="left:382.5px;top:708.1px;font-size:12px;line-height:20px;height:20px;color:#ffffff;letter-spacing:-0.167px;">Linux Gdb Server (runninglinuxkernel_4.0)</span>
<span class="t" style="left:617px;top:708.1px;font-size:12px;line-height:20px;height:20px;color:#ffffff;letter-spacing:-0.047px;">clangd: idle</span>
<svg style="left:694px;top:710.5px;" width="14" height="13" viewBox="0 0 14 13"><path d="M0.800 8.500C1.500 4.800 4.500 3.600 8 3.600V1L12.800 5L8 9V6.400C5 6.400 2.800 6.600 0.800 8.500Z" fill="none" stroke="#fff" stroke-width="1.100" stroke-linejoin="round"/><circle cx="5" cy="10.500" r="1.800" fill="none" stroke="#fff" stroke-width="1.100"/></svg>
<span class="t" style="left:711.2px;top:708.1px;font-size:11.93px;line-height:20px;height:20px;color:#ffffff;letter-spacing:-0.450px;">Live Share</span>
<span class="t" style="left:1029.3px;top:708.1px;font-size:12px;line-height:20px;height:20px;color:#ffffff;letter-spacing:-0.227px;">行 2977，列 1</span>
<span class="t" style="left:1120px;top:708.1px;font-size:12px;line-height:20px;height:20px;color:#ffffff;letter-spacing:-0.163px;">制表符长度: 4</span>
<span class="t" style="left:1208.9px;top:708.1px;font-size:11.47px;line-height:20px;height:20px;color:#ffffff;letter-spacing:-0.450px;">UTF-8</span>
<span class="t" style="left:1256.1px;top:708.1px;font-size:10.32px;line-height:20px;height:20px;color:#ffffff;letter-spacing:-0.450px;">LF</span>
<span class="t" style="left:1283.3px;top:708.1px;font-size:12px;line-height:20px;height:20px;color:#ffffff;">C</span>
<svg style="left:1307px;top:710.5px;" width="15" height="13" viewBox="0 0 15 13"><path d="M5.500 1H13.500V7.500H11.500V9.500L9.500 7.500H8.500" fill="none" stroke="#fff" stroke-width="1.100" stroke-linejoin="round"/><circle cx="4" cy="6.300" r="1.900" fill="none" stroke="#fff" stroke-width="1.100"/><path d="M0.600 12.500C0.800 10 2.200 9.200 4 9.200C5.800 9.200 7.200 10 7.400 12.500" fill="none" stroke="#fff" stroke-width="1.100"/></svg>
<svg style="left:1337.5px;top:710.5px;" width="14" height="13" viewBox="0 0 14 13"><path d="M2 10.500C3 9.500 3.200 8.500 3.200 6A3.600 3.600 0 0 1 10.400 6C10.400 8.500 10.600 9.500 11.600 10.500Z" fill="none" stroke="#fff" stroke-width="1.100" stroke-linejoin="round"/><path d="M5.400 11.200A1.500 1.500 0 0 0 8.200 11.200" fill="none" stroke="#fff" stroke-width="1.100"/></svg>
<div class="abs" style="left:434px;top:22px;width:210.2px;height:53.7px;border:2.4px solid #ed1c24;z-index:20"></div>
<div class="abs" style="left:334.1px;top:253px;width:396px;height:54px;border:2.2px solid #ed1c24;z-index:20"></div>
<div class="abs" style="left:356px;top:697px;width:250px;height:28px;border:2.1px solid #ed1c24;z-index:20"></div>
</body>
</html>
